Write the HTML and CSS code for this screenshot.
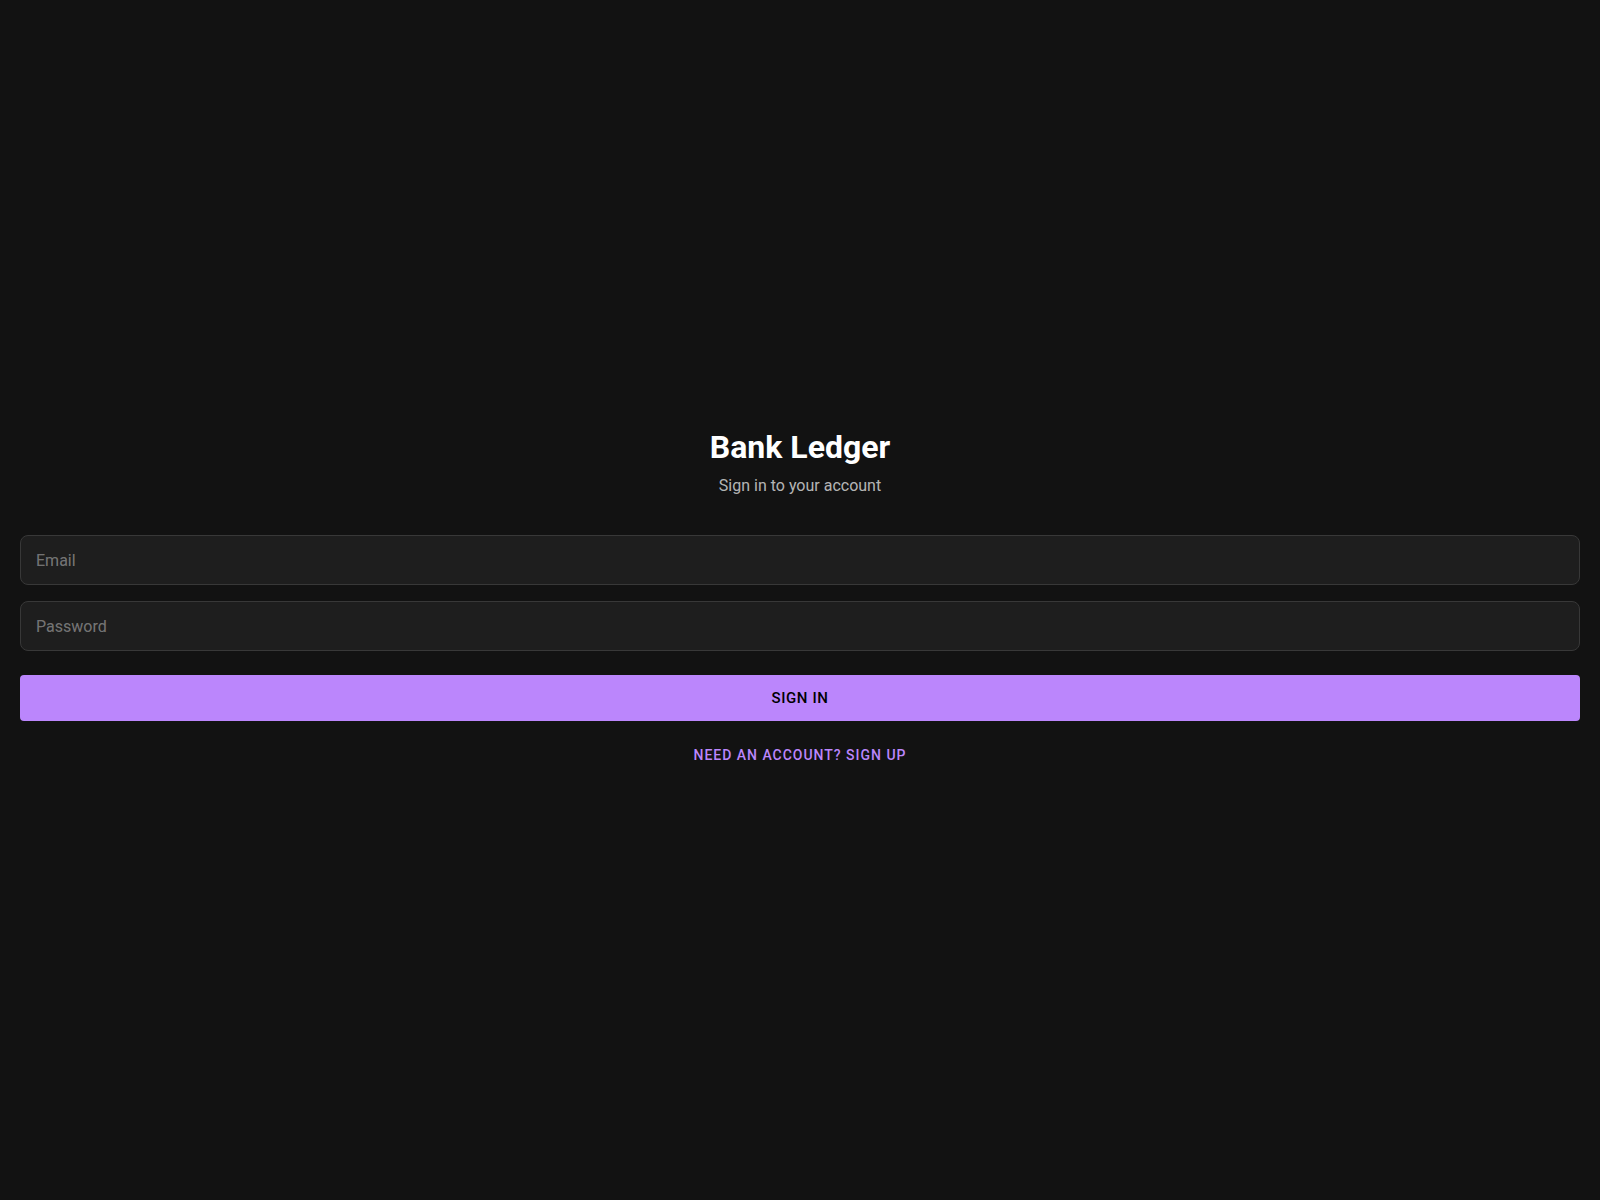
FILE: index.html
```html
<!DOCTYPE html>
<html lang="en">
<head>
<meta charset="utf-8">
<title>Bank Ledger</title>
<link rel="stylesheet" href="styles.css">
</head>
<body>
<main class="page">
  <div class="auth">
    <h1 class="title">Bank Ledger</h1>
    <p class="subtitle">Sign in to your account</p>
    <form class="form">
      <input class="field" type="email" placeholder="Email">
      <input class="field" type="password" placeholder="Password">
      <button class="primary" type="button">Sign In</button>
      <button class="link" type="button">Need an account? Sign up</button>
    </form>
  </div>
</main>
</body>
</html>
```

FILE: styles.css
```css
* { box-sizing: border-box; }
html, body { margin: 0; padding: 0; }
body {
  background: #121212;
  color: #fff;
  font-family: Roboto, "Liberation Sans", Arial, sans-serif;
}
.page {
  min-height: 100vh;
  display: flex;
  align-items: center;
  justify-content: center;
  padding: 2px 20px 0;
}
.auth {
  width: 100%;
  display: flex;
  flex-direction: column;
  align-items: center;
}
.title {
  margin: 0;
  font-size: 32px;
  font-weight: 700;
  line-height: 1.2;
  color: #fff;
}
.subtitle {
  margin: 8px 0 0;
  font-size: 16px;
  line-height: 24px;
  color: rgba(255,255,255,0.7);
}
.form {
  width: 100%;
  margin-top: 37px;
  display: flex;
  flex-direction: column;
  align-items: center;
}
.field {
  width: 100%;
  height: 50px;
  padding: 0 15px;
  background: #1e1e1e;
  border: 1px solid #383838;
  border-radius: 8px;
  color: #fff;
  font-family: inherit;
  font-size: 16px;
  outline: none;
}
.field + .field { margin-top: 16px; }
.field::placeholder { color: rgba(255,255,255,0.4); }
.primary {
  width: 100%;
  height: 46px;
  margin-top: 24px;
  border: 0;
  border-radius: 4px;
  background: #bb86fc;
  color: #000;
  font-family: inherit;
  font-size: 15px;
  font-weight: 500;
  letter-spacing: 0.04em;
  text-transform: uppercase;
}
.link {
  margin-top: 16px;
  padding: 6px 8px;
  border: 0;
  background: transparent;
  color: #bb86fc;
  font-family: inherit;
  font-size: 14px;
  font-weight: 500;
  line-height: 1.75;
  letter-spacing: 0.07em;
  text-transform: uppercase;
}
```
